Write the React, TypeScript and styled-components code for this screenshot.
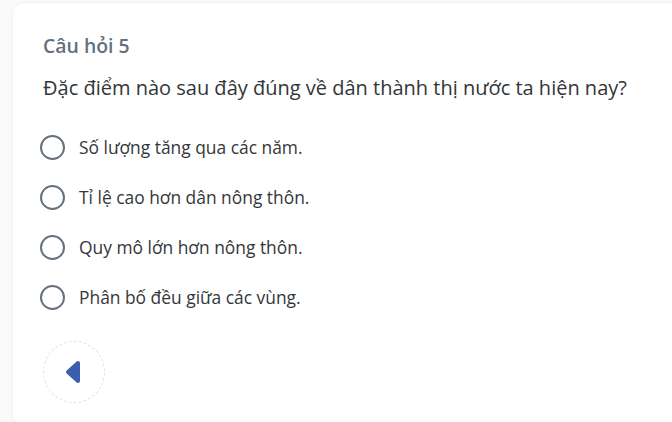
import React from "react";
import styled, { createGlobalStyle } from "styled-components";

const Global = createGlobalStyle`
  html, body { margin: 0; padding: 0; background: #fafafa; overflow: hidden; }
  body { font-family: "Open Sans", "Noto Sans", sans-serif; }
`;

const Page = styled.div`
  padding: 2px 0 0 12px;
  width: 672px;
  height: 422px;
  box-sizing: border-box;
  overflow: hidden;
`;

const Card = styled.section`
  width: 700px;
  background: #ffffff;
  border: 1px solid #f3f3f3;
  border-radius: 12px;
  box-shadow: 0 0 4px rgba(0, 0, 0, 0.025);
  padding: 31px 30px 22px 30px;
  box-sizing: border-box;
  display: flex;
  flex-direction: column;
`;

const Title = styled.h2`
  margin: 0;
  font-size: 19.4px;
  line-height: 24px;
  font-weight: 600;
  color: #64707e;
`;

const Question = styled.p`
  margin: 16px 0 0 0;
  font-size: 20px;
  line-height: 28px;
  font-weight: 400;
  color: #333639;
`;

const Options = styled.ul`
  list-style: none;
  margin: 20px 0 0 0;
  padding: 0;
  display: flex;
  flex-direction: column;
`;

const Option = styled.li`
  height: 50px;
  display: flex;
  align-items: center;
  gap: 14px;
  margin-left: -3px;
`;

const Radio = styled.span`
  width: 25px;
  height: 25px;
  box-sizing: border-box;
  border: 2.5px solid #65717e;
  border-radius: 50%;
  flex: none;
`;

const OptionText = styled.span`
  font-size: 17.4px;
  color: #33373b;
`;

const BackButton = styled.button`
  margin-top: 19px;
  width: 62px;
  height: 62px;
  border-radius: 50%;
  border: 1px dashed #e2e2e2;
  background: #ffffff;
  display: flex;
  align-items: center;
  justify-content: center;
  padding: 0 3px 0 0;
  cursor: pointer;
`;

const options = [
  "Số lượng tăng qua các năm.",
  "Tỉ lệ cao hơn dân nông thôn.",
  "Quy mô lớn hơn nông thôn.",
  "Phân bố đều giữa các vùng.",
];

export default function App() {
  return (
    <>
      <Global />
      <Page>
        <Card>
          <Title>Câu hỏi 5</Title>
          <Question>Đặc điểm nào sau đây đúng về dân thành thị nước ta hiện nay?</Question>
          <Options>
            {options.map((o) => (
              <Option key={o}>
                <Radio />
                <OptionText>{o}</OptionText>
              </Option>
            ))}
          </Options>
          <BackButton aria-label="Quay lại">
            <svg width="16" height="24" viewBox="0 0 16 24">
              <path
                d="M13 3 L3 12 L13 21 Z"
                fill="#3d5eb0"
                stroke="#3d5eb0"
                strokeWidth="4"
                strokeLinejoin="round"
              />
            </svg>
          </BackButton>
        </Card>
      </Page>
    </>
  );
}
